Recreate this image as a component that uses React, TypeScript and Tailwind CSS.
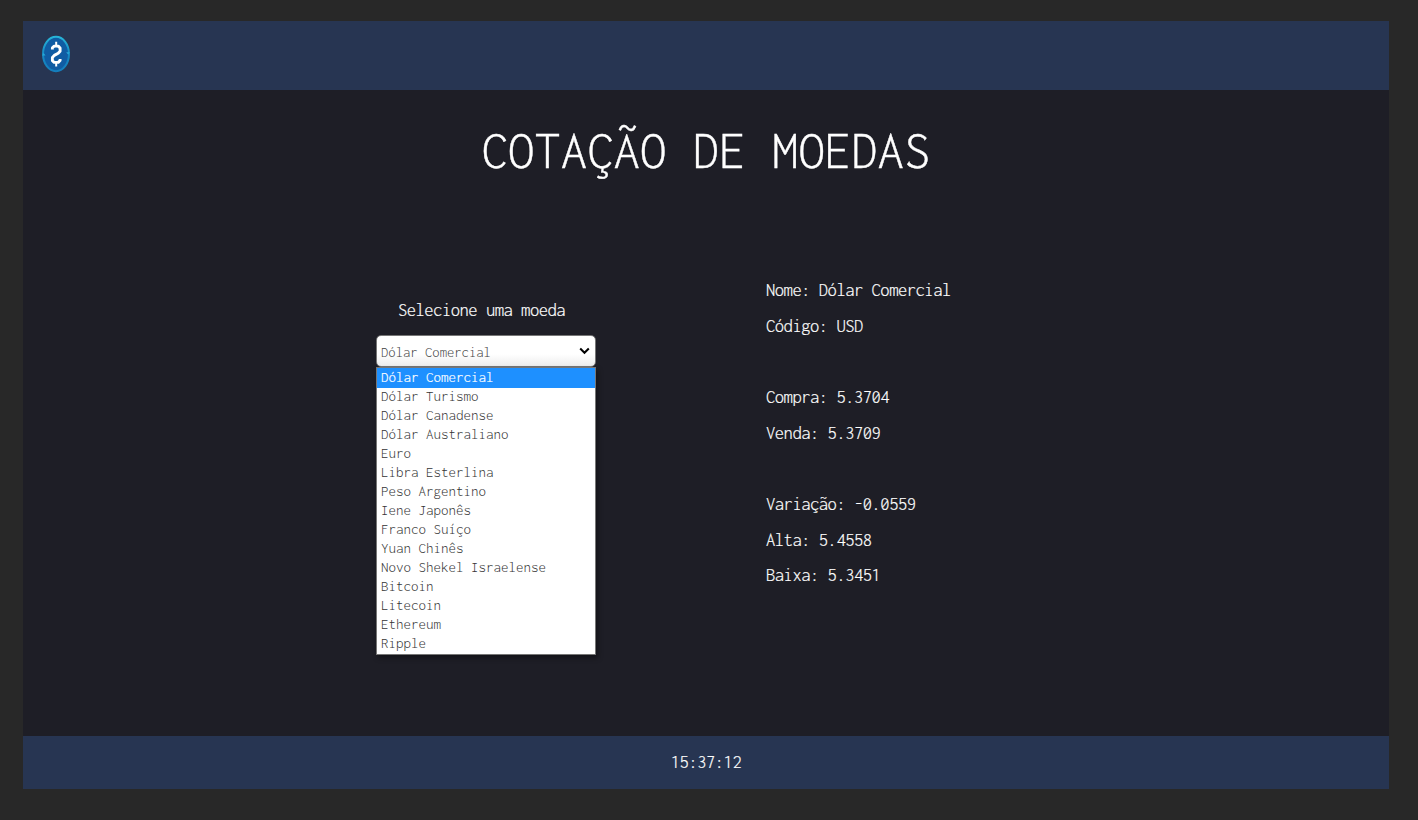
const coins = [
  'Dólar Comercial', 'Dólar Turismo', 'Dólar Canadense', 'Dólar Australiano', 'Euro',
  'Libra Esterlina', 'Peso Argentino', 'Iene Japonês', 'Franco Suíço', 'Yuan Chinês',
  'Novo Shekel Israelense', 'Bitcoin', 'Litecoin', 'Ethereum', 'Ripple',
];

const groups = [
  ['Nome: Dólar Comercial', 'Código: USD'],
  ['Compra: 5.3704', 'Venda: 5.3709'],
  ['Variação: -0.0559', 'Alta: 5.4558', 'Baixa: 5.3451'],
];

function Logo() {
  return (
    <svg className="h-[38px] w-[30px]" viewBox="0 0 30 38" fill="none">
      <defs>
        <linearGradient id="rim" x1="0" y1="0" x2="0" y2="1">
          <stop offset="0" stopColor="#27b4d8" />
          <stop offset="0.5" stopColor="#168ac4" />
          <stop offset="1" stopColor="#147dbb" />
        </linearGradient>
      </defs>
      <ellipse cx="15" cy="19" rx="13" ry="17.2" fill="#105ca3" stroke="url(#rim)" strokeWidth="2" />
      <path d="M1 20.5l1.7-2.4 1.8 2.4zM25.2 17.2l1.9 2.4 1.9-2.4z" fill="#27a8d6" />
      <path d="M11.4 14.4v-1.6l1.8-1.7h4l1.9 1.9v3.2l-1.9 2.1-3.9 2.1-1.9 2.1v3.2l1.8 1.7h4l1.9-1.9v-1.4" stroke="#fff" strokeWidth="2.9" strokeLinejoin="round" />
      <path d="M15.2 6.8v4M15.2 27.4v4" stroke="#fff" strokeWidth="2" />
    </svg>
  );
}

export default function App() {
  return (
    <div className="h-[820px] w-[1418px] overflow-hidden bg-[#282828] pt-[21px] pl-[23px] font-['Inconsolata','Noto_Sans_Mono_CJK_JP','DejaVu_Sans_Mono',monospace] text-[18.6px] font-light tracking-[-0.5px] text-white">
      <div className="flex h-[768px] w-[1366px] flex-col bg-[#1e1e26]">
        <header className="flex h-[69px] shrink-0 items-center bg-[#273552] pb-[3px] pl-[18px]">
          <Logo />
        </header>
        <main className="flex flex-1 flex-col items-center">
          <h1 className="mt-[34px] h-[53px] text-[52.8px] leading-[53px] font-light tracking-normal whitespace-pre [-webkit-text-stroke:0.4px_white]">COTAÇÃO DE MOEDAS</h1>
          <div className="flex w-full pt-[95px] pl-[353px]">
            <section className="flex w-[220px] flex-col pt-[20px]">
              <label className="h-[36px] pr-[9px] text-center leading-[36px] [-webkit-text-stroke:0.2px_white]">Selecione uma moeda</label>
              <div className="relative mt-[7px] h-[32px]">
                <button className="flex h-[32px] w-[220px] items-center justify-between rounded-[5px] border border-[#767676] bg-linear-to-b from-white from-60% to-[#ededed] pr-[5px] pl-[4px] text-[14.67px] font-light tracking-normal text-[#444]">
                  <span className="pt-[2px]">Dólar Comercial</span>
                  <svg className="h-[8px] w-[11px]" viewBox="0 0 11 8" fill="none">
                    <path d="M1.2 1.5l4.3 4.3 4.3-4.3" stroke="#000" strokeWidth="2" />
                  </svg>
                </button>
                <ul className="absolute top-[32px] left-0 w-[220px] border border-[#767676] bg-white text-[15px] font-light tracking-normal text-[#333] shadow-[2px_3px_5px_rgba(0,0,0,0.4)]">
                  {coins.map((coin, i) => (
                    <li key={coin} className={i === 0 ? 'h-[20px] bg-[#1e90ff] pl-[4px] leading-[19px] text-white [-webkit-text-stroke:0.2px_white]' : 'h-[19px] pl-[4px] leading-[17px]'}>
                      {coin}
                    </li>
                  ))}
                </ul>
              </div>
            </section>
            <section className="ml-[170px] flex flex-col gap-[35px] [-webkit-text-stroke:0.2px_white]">
              {groups.map((lines) => (
                <div key={lines[0]}>
                  {lines.map((line) => (
                    <p key={line} className="h-[36px] leading-[36px] nth-3:-mt-px">{line}</p>
                  ))}
                </div>
              ))}
            </section>
          </div>
        </main>
        <footer className="flex h-[53px] shrink-0 items-center justify-center bg-[#273552] [-webkit-text-stroke:0.2px_white]">15:37:12</footer>
      </div>
    </div>
  );
}
